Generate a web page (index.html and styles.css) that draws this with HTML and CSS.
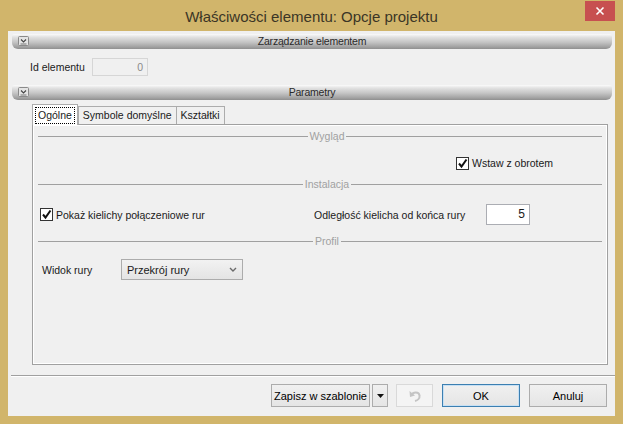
FILE: index.html
```html
<!DOCTYPE html>
<html lang="pl">
<head>
    <meta charset="UTF-8">
    <title>Właściwości elementu: Opcje projektu</title>
    <link rel="stylesheet" href="styles.css">
</head>
<body>
<div class="window">
    <div class="titlebar">
        <div class="title">Właściwości elementu: Opcje projektu</div>
        <div class="close">
            <svg width="10" height="10" viewBox="0 0 10 10"><path d="M1.5 1.5 L8.5 8.5 M8.5 1.5 L1.5 8.5" stroke="#fff" stroke-width="1.6"/></svg>
        </div>
    </div>

    <div class="client">
        <!-- sekcja: zarządzanie -->
        <div class="section-bar">
            <svg class="toggle" width="11" height="11" viewBox="0 0 11 11">
                <rect x="0.5" y="0.5" width="10" height="9" rx="1" fill="#e4e4e4" stroke="#8a8a8a"/>
                <path d="M3 3.5 L5.5 6 L8 3.5" fill="none" stroke="#444" stroke-width="1.1"/>
                <path d="M2.5 8 H8.5" stroke="#777"/>
            </svg>
            <span class="section-title">Zarządzanie elementem</span>
        </div>

        <div class="id-row">
            <span class="label">Id elementu</span>
            <div class="textbox disabled">0</div>
        </div>

        <!-- sekcja: parametry -->
        <div class="section-bar">
            <svg class="toggle" width="11" height="11" viewBox="0 0 11 11">
                <rect x="0.5" y="0.5" width="10" height="9" rx="1" fill="#e4e4e4" stroke="#8a8a8a"/>
                <path d="M3 3.5 L5.5 6 L8 3.5" fill="none" stroke="#444" stroke-width="1.1"/>
                <path d="M2.5 8 H8.5" stroke="#777"/>
            </svg>
            <span class="section-title">Parametry</span>
        </div>

        <div class="tabs">
            <div class="tab-strip">
                <div class="tab active"><span class="focus">Ogólne</span></div>
                <div class="tab">Symbole domyślne</div>
                <div class="tab">Kształtki</div>
            </div>
            <div class="tab-page">
                <div class="group-line"><span>Wygląd</span></div>
                <div class="row row-look">
                    <span class="check"><svg width="11" height="11" viewBox="0 0 11 11"><path d="M2 5.5 L4.5 8.5 L9.5 1.5" fill="none" stroke="#111" stroke-width="2"/></svg></span>
                    <span>Wstaw z obrotem</span>
                </div>

                <div class="group-line"><span>Instalacja</span></div>
                <div class="row row-install">
                    <div class="check-item">
                        <span class="check"><svg width="11" height="11" viewBox="0 0 11 11"><path d="M2 5.5 L4.5 8.5 L9.5 1.5" fill="none" stroke="#111" stroke-width="2"/></svg></span>
                        <span>Pokaż kielichy połączeniowe rur</span>
                    </div>
                    <span class="field-label">Odległość kielicha od końca rury</span>
                    <div class="textbox number">5</div>
                </div>

                <div class="group-line"><span>Profil</span></div>
                <div class="row row-profile">
                    <span class="field-label short">Widok rury</span>
                    <div class="select">
                        <span>Przekrój rury</span>
                        <svg width="8" height="6" viewBox="0 0 8 6"><path d="M1 1 L4 4 L7 1" fill="none" stroke="#6a6a6a" stroke-width="1.4"/></svg>
                    </div>
                </div>
            </div>
        </div>

        <div class="footer">
            <button class="btn btn-save">Zapisz w szablonie</button>
            <button class="btn btn-arrow"><svg width="7" height="4" viewBox="0 0 7 4"><path d="M0 0 H7 L3.5 4 Z" fill="#111"/></svg></button>
            <button class="btn btn-undo" disabled>
                <svg width="16" height="16" viewBox="0 0 16 16">
                    <path d="M4.5 7 C6 3.5 12 3.5 12.5 7.5 C13 10.5 10.5 12.5 8 13" fill="none" stroke="#c4c4c4" stroke-width="2"/>
                    <path d="M2.5 3 L3 9 L8 7.5 Z" fill="#c4c4c4"/>
                </svg>
            </button>
            <button class="btn btn-ok">OK</button>
            <button class="btn btn-cancel">Anuluj</button>
        </div>
    </div>
</div>
</body>
</html>
```

FILE: styles.css
```css
* {
    box-sizing: border-box;
}

body {
    margin: 0;
    font-family: "Liberation Sans", Arial, sans-serif;
    font-size: 10.5px;
    color: #1a1a1a;
}

.window {
    width: 623px;
    height: 424px;
    background: #d1b56b;
    padding: 0 8px 8px 8px;
    display: flex;
    flex-direction: column;
}

.titlebar {
    height: 31px;
    margin: 0 -8px;
    display: grid;
    grid-template-columns: 1fr auto 1fr;
    align-items: start;
}

.title {
    grid-column: 2;
    font-size: 15px;
    color: #3b3526;
    line-height: 33px;
}

.close {
    grid-column: 3;
    justify-self: end;
    margin: 1px 8px 0 0;
    width: 30px;
    height: 20px;
    background: #c75050;
    display: flex;
    align-items: center;
    justify-content: center;
}

.client {
    flex: 1;
    background: #f0f0f0;
    padding: 3px 3px 0 4px;
    display: flex;
    flex-direction: column;
}

.section-bar {
    height: 15px;
    display: grid;
    grid-template-columns: 1fr auto 1fr;
    align-items: center;
    border-radius: 3px 3px 6px 6px;
    background: linear-gradient(#fbfbfb 0%, #e2e2e2 20%, #c4c4c4 55%, #a3a3a3 85%, #8f8f8f 100%);
}

.toggle {
    margin-left: 6px;
}

.section-title {
    grid-column: 2;
    color: #2a2a2a;
    font-size: 10.5px;
    line-height: 15px;
    letter-spacing: -0.2px;
}

.id-row {
    display: flex;
    align-items: center;
    margin: 9px 0 9px 18px;
    height: 18px;
}

.id-row .label {
    width: 62px;
}

.textbox {
    height: 18px;
    border: 1px solid #abadb3;
    background: #fff;
    text-align: right;
    padding-right: 4px;
    line-height: 16px;
}

.textbox.disabled {
    width: 56px;
    background: #f0f0f0;
    border-color: #d6d6d6;
    color: #8a8a8a;
}

/* zakładki */
.tabs {
    margin: 3px 4px 0 20px;
}

.tab-strip {
    display: flex;
    align-items: flex-end;
    height: 21px;
}

.tab {
    height: 18px;
    padding: 0 4px;
    border: 1px solid #acacac;
    border-bottom: none;
    background: #f0f0f0;
    line-height: 17px;
    margin-left: -1px;
    white-space: nowrap;
}

.tab.active {
    height: 21px;
    margin-left: 0;
    margin-right: 1px;
    padding: 2px 2px 0 2px;
    background: #fff;
    position: relative;
    z-index: 1;
    margin-bottom: -1px;
}

.tab.active .focus {
    display: block;
    border: 1px dotted #000;
    padding: 0 2px;
    line-height: 15px;
}

.tab-page {
    height: 241px;
    border: 1px solid #a0a0a0;
    box-shadow: inset 1px 1px 0 #fff, inset -1px -1px 0 #fff;
    background: #f0f0f0;
    padding: 4px 5px 0 5px;
}

.group-line {
    display: flex;
    align-items: center;
    height: 14px;
    color: #a0a0a0;
}

.group-line::before,
.group-line::after {
    content: "";
    height: 1px;
    background: #a0a0a0;
    flex: 1 0 0;
}

.group-line::before {
    flex-basis: 14px;
}

.group-line span {
    padding: 0 2px;
}

.row {
    display: flex;
    align-items: center;
    white-space: nowrap;
}

.row-look {
    height: 20px;
    margin: 10px 0 4px 418px;
}

.row-install {
    height: 21px;
    margin: 13px 0 9px 2px;
}

.row-profile {
    height: 21px;
    margin: 11px 0 0 4px;
}

.check-item {
    display: flex;
    align-items: center;
    width: 274px;
}

.check {
    width: 13px;
    height: 13px;
    border: 1px solid #333;
    background: #fff;
    display: flex;
    align-items: center;
    justify-content: center;
    margin-right: 3px;
}

.field-label {
    width: 172px;
}

.field-label.short {
    width: 79px;
}

.textbox.number {
    width: 44px;
    height: 21px;
    line-height: 19px;
    font-size: 12px;
}

.select {
    width: 122px;
    height: 21px;
    border: 1px solid #acacac;
    background: linear-gradient(#f2f2f2, #e4e4e4);
    display: flex;
    align-items: center;
    justify-content: space-between;
    padding: 0 5px 0 5px;
    font-size: 11px;
}

/* dół okna */
.footer {
    margin: 10px -3px 0 -1px;
    border-top: 1px solid #a0a0a0;
    box-shadow: inset 0 1px 0 #fff;
    padding: 8px 8px 0 0;
    display: flex;
    justify-content: flex-end;
}

.btn {
    height: 23px;
    font-family: "Liberation Sans", Arial, sans-serif;
    font-size: 11px;
    border: 1px solid #acacac;
    background: linear-gradient(#f0f0f0, #e5e5e5);
    color: #000;
    padding: 0;
    white-space: nowrap;
    display: flex;
    align-items: center;
    justify-content: center;
}

.btn-save {
    width: 99px;
}

.btn-arrow {
    width: 16px;
    margin-left: 2px;
}

.btn-undo {
    width: 37px;
    margin-left: 8px;
    background: #f4f4f4;
    border-color: #d9d9d9;
}

.btn-ok {
    width: 78px;
    margin-left: 9px;
    border-color: #3c7fb1;
    box-shadow: inset 0 0 0 1px #c7e0f4;
}

.btn-cancel {
    width: 78px;
    margin-left: 9px;
}
```
